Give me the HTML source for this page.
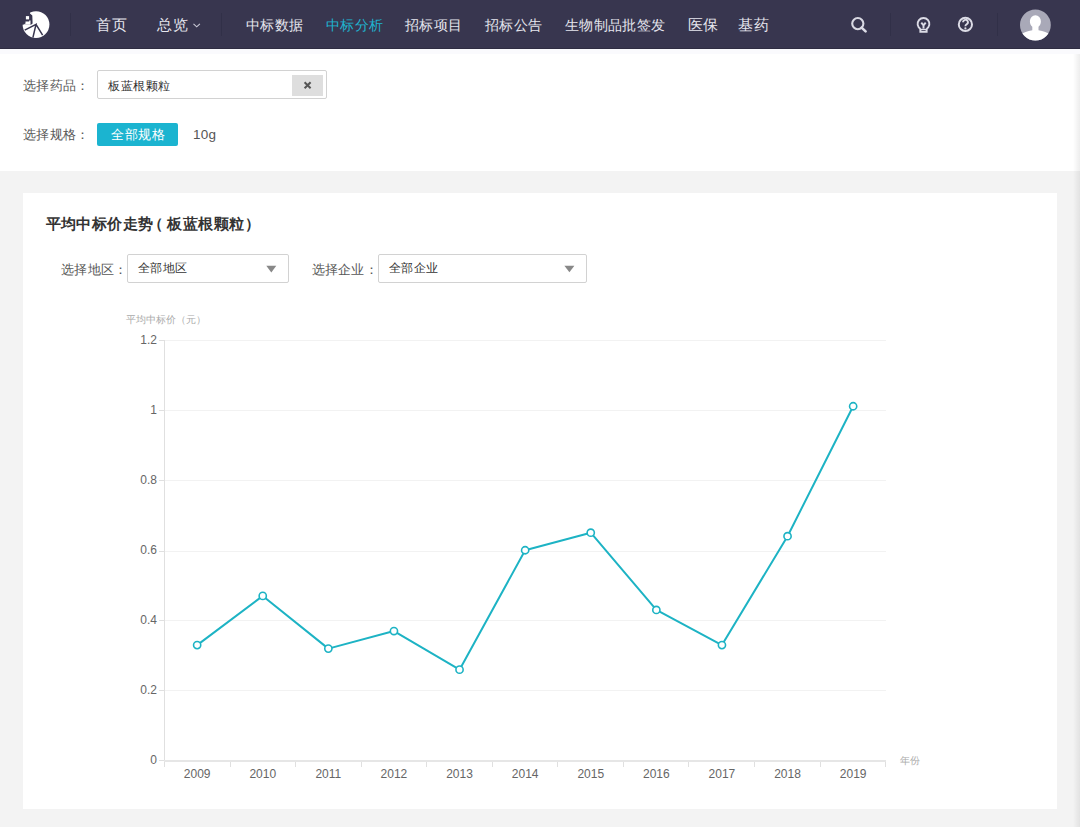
<!DOCTYPE html>
<html><head><meta charset="utf-8">
<style>
*{margin:0;padding:0;box-sizing:border-box}
html,body{width:1080px;height:827px;overflow:hidden;background:#f3f3f3;font-family:"Liberation Sans",sans-serif;color:#333}
.abs{position:absolute}
#nav{position:absolute;left:0;top:0;width:1080px;height:49px;background:#38364f;border-bottom:1px solid #2f2d42}
.nv{position:absolute;top:17px;font-size:14px;letter-spacing:0.33px;color:#e6e6ee;line-height:17px;white-space:nowrap}
.sep{position:absolute;top:13px;width:1px;height:23px;background:#313048}
#top{position:absolute;left:0;top:49px;width:1080px;height:122px;background:#fff}
.lbl{position:absolute;font-size:13px;letter-spacing:0.25px;color:#575757;line-height:16px;white-space:nowrap}
#card{position:absolute;left:23px;top:193px;width:1034px;height:616px;background:#fff}
#rshade{position:absolute;right:0;top:52px;width:7px;height:775px;background:linear-gradient(to right,rgba(0,0,0,0),rgba(0,0,0,0.07))}
#ntint{position:absolute;left:0;top:49px;width:1080px;height:5px;background:#fafafd}
.ttl{position:absolute;top:22px;font-size:15px;font-weight:bold;color:#333;white-space:nowrap;line-height:18px;letter-spacing:0.44px}
svg text{font-family:"Liberation Sans",sans-serif}
</style></head><body>
<div id="nav">
  <div class="sep" style="left:70px"></div>
  <div class="nv" style="left:96px;font-size:15px;top:15.8px;letter-spacing:1px">首页</div>
  <div class="nv" style="left:156.6px;font-size:15px;top:15.8px;letter-spacing:1px">总览</div>
  <div class="sep" style="left:221px"></div>
  <div class="nv" style="left:246px">中标数据</div>
  <div class="nv" style="left:326px;color:#1fb4cf">中标分析</div>
  <div class="nv" style="left:405px">招标项目</div>
  <div class="nv" style="left:485px">招标公告</div>
  <div class="nv" style="left:565px">生物制品批签发</div>
  <div class="nv" style="left:687.5px;font-size:15px;top:16px;letter-spacing:0.5px">医保</div>
  <div class="nv" style="left:738px;font-size:15px;top:16px;letter-spacing:0.5px">基药</div>
  <div class="sep" style="left:890px"></div>
  <div class="sep" style="left:997px"></div>
</div>
<div id="top">
  <div class="lbl" style="left:23px;top:29px">选择药品：</div>
  <div class="abs" style="left:97px;top:21px;width:230px;height:29px;border:1px solid #d2d2d2;border-radius:2px"></div>
  <div class="lbl" style="left:108px;top:29px;color:#333;font-size:12px;letter-spacing:0.6px">板蓝根颗粒</div>
  <div class="abs" style="left:292px;top:26px;width:31px;height:21px;background:#dedede"></div>
  <div class="lbl" style="left:23px;top:77.5px">选择规格：</div>
  <div class="abs" style="left:97px;top:74px;width:81px;height:23px;background:#1bb4d0;border-radius:2px"></div>
  <div class="lbl" style="left:111px;top:78px;color:#fff;letter-spacing:0.5px">全部规格</div>
  <div class="lbl" style="left:193px;top:78px;color:#555;font-size:13.5px">10g</div>
</div>
<div id="card">
  <div class="ttl" style="left:22.6px">平均中标价走势</div>
  <div class="ttl" style="left:125.4px">（</div>
  <div class="ttl" style="left:144.2px">板蓝根颗粒</div>
  <div class="ttl" style="left:221.9px">）</div>
  <div class="lbl" style="left:38px;top:68.5px">选择地区：</div>
  <div class="abs" style="left:104px;top:61px;width:162px;height:29px;border:1px solid #d2d2d2;border-radius:2px"></div>
  <div class="lbl" style="left:115px;top:67px;color:#333;font-size:12px;letter-spacing:0.33px">全部地区</div>
  <div class="lbl" style="left:288.5px;top:68.5px">选择企业：</div>
  <div class="abs" style="left:355px;top:61px;width:209px;height:29px;border:1px solid #d2d2d2;border-radius:2px"></div>
  <div class="lbl" style="left:366px;top:67px;color:#333;font-size:12px;letter-spacing:0.33px">全部企业</div>
</div>
<div id="rshade"></div>
<div id="ntint"></div>
<svg class="abs" style="left:0;top:0" width="1080" height="827" viewBox="0 0 1080 827">
  <!-- logo -->
  <g>
    <circle cx="36" cy="24.6" r="13.4" fill="#fff"/>
    <path d="M21,9 L30,9 L30,13.5 L32.3,15.5 L32.6,23.6 L31,24.8 L21,24.8 Z" fill="#38364f"/>
    <rect x="25.9" y="16.1" width="3.2" height="3.3" fill="#fff"/>
    <path d="M25.5,21.6 L29.2,21.6 L29.2,20.4 L30.5,20.4 L30.5,24.8 L23,24.8 L25.5,23.5 Z" fill="#fff"/>
    <path d="M24.7,30.2 L36,24.3 L32.9,37.6 M36,24.3 L42.6,35.2" stroke="#38364f" stroke-width="1.5" fill="none"/>
  </g>
  <!-- chevron -->
  <path d="M193.5,23.8 L196.7,26.8 L199.9,23.8" stroke="#c9c9d6" stroke-width="1.1" fill="none"/>
  <!-- search -->
  <circle cx="857.8" cy="23.6" r="5.6" stroke="#d8d8e2" stroke-width="2.1" fill="none"/>
  <path d="M861.6,27.6 L865.6,31.4" stroke="#dcdce6" stroke-width="2.6" stroke-linecap="round"/>
  <!-- bulb -->
  <g transform="translate(0,0.8)">
  <g stroke="#dcdce6" fill="none" stroke-width="1.9">
    <path d="M920.6,28.2 A5.9,5.9 0 1 1 926.4,28.2"/>
    <path d="M923.5,27.6 L923.5,24.6 M921.3,21.9 L923.5,24.6 L925.7,21.9" stroke-width="1.9"/>
  </g>
  <path d="M919.4,28 H927.6 V32 H919.4 Z M921.4,29.4 V30.3 H925.6 V29.4 Z" fill="#dcdce6" fill-rule="evenodd"/>
  </g>
  <!-- help -->
  <circle cx="965.4" cy="24.4" r="6.6" stroke="#dcdce6" stroke-width="2" fill="none"/>
  <path d="M963.1,22.3 A2.4,2.4 0 1 1 966.6,24.3 Q965.4,25 965.4,26.2" stroke="#dcdce6" stroke-width="1.9" fill="none"/>
  <circle cx="965.4" cy="28.4" r="1.1" fill="#dcdce6"/>
  <!-- avatar -->
  <defs><clipPath id="av"><circle cx="1035.4" cy="25" r="15.4"/></clipPath></defs>
  <circle cx="1035.4" cy="25" r="15.4" fill="#a9a9b8"/>
  <g clip-path="url(#av)" fill="#fff">
    <path d="M1029.9,21.2 A5.5,5.9 0 1 1 1040.9,21.2 C1040.9,23.7 1040,25.6 1038.5,26.8 V30.2 C1043.5,31 1047.5,32.4 1050.5,34.7 V50 H1020.3 V34.7 C1023.3,32.4 1027.3,31 1032.3,30.2 V26.8 C1030.8,25.6 1029.9,23.7 1029.9,21.2 Z"/>
  </g>
  <!-- clear x -->
  <path d="M304.6,82.2 L310.6,88.2 M310.6,82.2 L304.6,88.2" stroke="#555" stroke-width="2"/>
  <!-- select triangles -->
  <path d="M266.3,265.8 L276.3,265.8 L271.3,272.4 Z" fill="#888"/>
  <path d="M564.4,265.8 L574.4,265.8 L569.4,272.2 Z" fill="#888"/>

  <!-- chart -->
  <text x="125.5" y="322.5" font-size="10" fill="#aaa">平均中标价（元）</text>
  <g stroke="#f2f2f2" stroke-width="1">
    <line x1="164" y1="340.5" x2="886" y2="340.5"/>
    <line x1="164" y1="410.5" x2="886" y2="410.5"/>
    <line x1="164" y1="480.5" x2="886" y2="480.5"/>
    <line x1="164" y1="551.5" x2="886" y2="551.5"/>
    <line x1="164" y1="620.5" x2="886" y2="620.5"/>
    <line x1="164" y1="690.5" x2="886" y2="690.5"/>
  </g>
  <g stroke="#e0e0e0" stroke-width="1">
    <line x1="159" y1="340.5" x2="164" y2="340.5"/>
    <line x1="159" y1="410.5" x2="164" y2="410.5"/>
    <line x1="159" y1="480.5" x2="164" y2="480.5"/>
    <line x1="159" y1="551.5" x2="164" y2="551.5"/>
    <line x1="159" y1="620.5" x2="164" y2="620.5"/>
    <line x1="159" y1="690.5" x2="164" y2="690.5"/>
    <line x1="159" y1="760.5" x2="164" y2="760.5"/>
    <line x1="164.5" y1="340" x2="164.5" y2="767"/>
    <line x1="164" y1="761" x2="886" y2="761" stroke="#e6e6e6" stroke-width="2"/>
    <path d="M230.5,762 V767 M295.5,762 V767 M361.5,762 V767 M426.5,762 V767 M492.5,762 V767 M557.5,762 V767 M623.5,762 V767 M688.5,762 V767 M754.5,762 V767 M820.5,762 V767 M885.5,762 V767"/>
  </g>
  <g font-size="12" fill="#666" text-anchor="end">
    <text x="157" y="343.5">1.2</text>
    <text x="157" y="413.5">1</text>
    <text x="157" y="483.5">0.8</text>
    <text x="157" y="554">0.6</text>
    <text x="157" y="623.5">0.4</text>
    <text x="157" y="693.5">0.2</text>
    <text x="157" y="764">0</text>
  </g>
  <g font-size="12" fill="#666" text-anchor="middle">
    <text x="197.15" y="778">2009</text>
    <text x="262.75" y="778">2010</text>
    <text x="328.35" y="778">2011</text>
    <text x="393.95" y="778">2012</text>
    <text x="459.55" y="778">2013</text>
    <text x="525.15" y="778">2014</text>
    <text x="590.75" y="778">2015</text>
    <text x="656.35" y="778">2016</text>
    <text x="721.95" y="778">2017</text>
    <text x="787.55" y="778">2018</text>
    <text x="853.15" y="778">2019</text>
  </g>
  <text x="900" y="764" font-size="10" fill="#aaa">年份</text>
  <polyline fill="none" stroke="#1db3c4" stroke-width="2" stroke-linejoin="round" points="197.15,645.09 262.75,595.91 328.35,648.6 393.95,631.04 459.55,669.67 525.15,550.25 590.75,532.69 656.35,609.96 721.95,645.09 787.55,536.2 853.15,406.24"/>
  <g fill="#fff" stroke="#1db3c4" stroke-width="1.6">
    <circle cx="197.15" cy="645.09" r="3.6"/>
    <circle cx="262.75" cy="595.91" r="3.6"/>
    <circle cx="328.35" cy="648.6" r="3.6"/>
    <circle cx="393.95" cy="631.04" r="3.6"/>
    <circle cx="459.55" cy="669.67" r="3.6"/>
    <circle cx="525.15" cy="550.25" r="3.6"/>
    <circle cx="590.75" cy="532.69" r="3.6"/>
    <circle cx="656.35" cy="609.96" r="3.6"/>
    <circle cx="721.95" cy="645.09" r="3.6"/>
    <circle cx="787.55" cy="536.2" r="3.6"/>
    <circle cx="853.15" cy="406.24" r="3.6"/>
  </g>
</svg>
</body></html>
